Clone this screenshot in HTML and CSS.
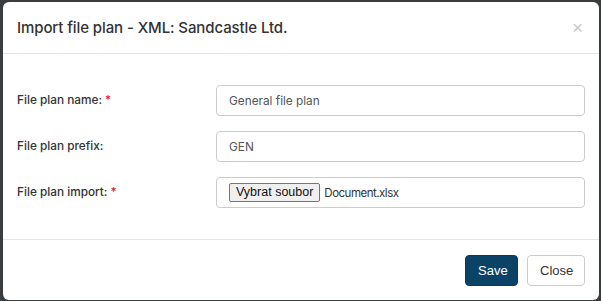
FILE: index.html
```html
<!DOCTYPE html>
<html lang="en">
<head>
    <meta charset="UTF-8">
    <meta name="viewport" content="width=device-width, initial-scale=1.0">
    <title>Import file plan</title>
    <link rel="stylesheet" href="styles.css">
</head>
<body>

<div class="modal">
    <div class="modal-header">
        <h4 class="modal-title">Import file plan - XML: Sandcastle Ltd.</h4>
        <button class="modal-close" type="button">&times;</button>
    </div>

    <div class="modal-body">
        <div class="form-row">
            <label class="form-label">File plan name: <span class="required">*</span></label>
            <div class="form-control">General file plan</div>
        </div>
        <div class="form-row">
            <label class="form-label">File plan prefix:</label>
            <div class="form-control">GEN</div>
        </div>
        <div class="form-row">
            <label class="form-label">File plan import: <span class="required">*</span></label>
            <div class="form-control file-control">
                <span class="file-button">Vybrat soubor</span>
                <span class="file-name">Document.xlsx</span>
            </div>
        </div>
    </div>

    <div class="modal-footer">
        <button class="btn btn-primary" type="button">Save</button>
        <button class="btn btn-default" type="button">Close</button>
    </div>
</div>

</body>
</html>
```

FILE: styles.css
```css
body {
    font-family: 'Inter', 'Liberation Sans', sans-serif;
    margin: 0;
    padding: 2px 2px 1px 3px;
    background-color: #3a3d40;
    color: #333;
    height: 301px;
    box-sizing: border-box;
}

.modal {
    background: #fff;
    border-radius: 6px;
    height: 298px;
    box-sizing: border-box;
    display: flex;
    flex-direction: column;
}

.modal-header {
    display: flex;
    align-items: center;
    justify-content: space-between;
    height: 52px;
    padding: 0 14px;
    border-bottom: 1px solid #e5e5e5;
    box-sizing: border-box;
}

.modal-title {
    margin: 0;
    font-size: 15px;
    font-weight: 500;
    color: #333;
    letter-spacing: -0.1px;
}

.modal-close {
    border: 0;
    background: none;
    padding: 0 2px 0 0;
    font-family: 'Liberation Sans', sans-serif;
    font-size: 19px;
    color: #c8c8c8;
    line-height: 1;
}

.modal-body {
    flex: 1;
    padding: 31px 14px 0;
    display: flex;
    flex-direction: column;
    gap: 15px;
}

.form-row {
    display: grid;
    grid-template-columns: 199px 1fr;
    align-items: center;
}

.form-label {
    font-size: 11.8px;
    font-weight: 500;
    color: #333;
    padding-bottom: 2px;
}

.required {
    color: #e02020;
}

.form-control {
    height: 31px;
    box-sizing: border-box;
    border: 1px solid #ccc;
    border-radius: 4px;
    padding: 0 12px;
    display: flex;
    align-items: center;
    font-size: 11.8px;
    color: #555;
}

.file-control {
    gap: 4px;
}

.file-button {
    font-family: 'Liberation Sans', sans-serif;
    font-size: 12.5px;
    color: #111;
    background: #efefef;
    border: 1px solid #767676;
    border-radius: 2px;
    padding: 1px 6px 2px;
}

.file-name {
    font-size: 11.5px;
    letter-spacing: -0.5px;
    color: #333;
}

.modal-footer {
    display: flex;
    justify-content: flex-end;
    gap: 9px;
    padding: 15px 14px 14px;
    border-top: 1px solid #e5e5e5;
}

.btn {
    height: 31px;
    border-radius: 4px;
    font-family: 'Liberation Sans', sans-serif;
    font-size: 13px;
    padding: 0 12px;
}

.btn-primary {
    background-color: #0b4366;
    border: 1px solid #0b3b59;
    color: #fff;
    width: 53px;
}

.btn-default {
    background-color: #fff;
    border: 1px solid #ccc;
    color: #333;
    width: 58px;
}
```
